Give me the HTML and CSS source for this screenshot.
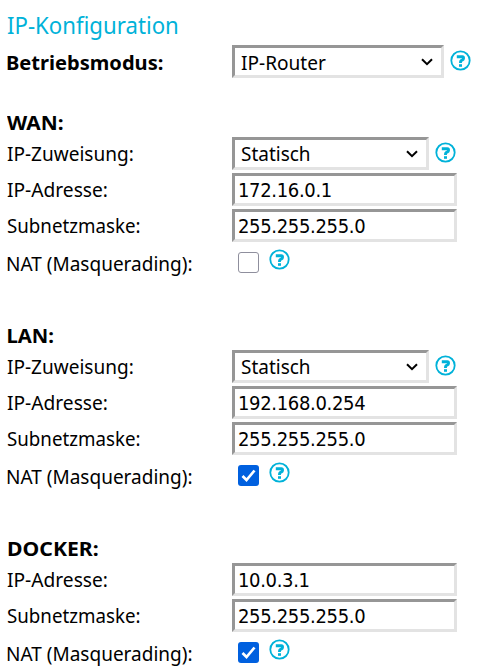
FILE: index.html
```html
<!DOCTYPE html>
<html lang="de">
<head>
<meta charset="utf-8">
<title>IP-Konfiguration</title>
<link rel="stylesheet" href="styles.css">
</head>
<body>
<svg width="0" height="0" class="defs">
  <symbol id="help" viewBox="0 0 21 21">
    <circle cx="10.5" cy="10.5" r="9.2" fill="none" stroke="currentColor" stroke-width="1.8"/>
    <path d="M6.8 6.7H12.4Q13.5 6.7 13.5 7.8V8.5Q13.5 9.6 12.3 10L11.5 10.3Q10.5 10.7 10.5 12V13" fill="none" stroke="currentColor" stroke-width="2.9"/>
    <path d="M9 14.2h3v2.6h-3z" fill="currentColor"/>
  </symbol>
  <symbol id="chevron" viewBox="0 0 12 8">
    <path d="M1 1.2L6 6.2L11 1.2" fill="none" stroke="#000" stroke-width="2"/>
  </symbol>
</svg>
<main>
  <h1><span class="t-title">IP-Konfiguration</span></h1>
  <div class="row mode">
    <span class="label bold"><span class="t-mode">Betriebsmodus:</span></span>
    <div class="select wide"><span class="t-router">IP-Router</span><svg class="chevron"><use href="#chevron"/></svg></div>
    <svg class="help"><use href="#help"/></svg>
  </div>

  <section>
    <h2><span class="t-wan">WAN:</span></h2>
    <div class="row">
      <span class="label"><span class="t-assign">IP-Zuweisung:</span></span>
      <div class="select"><span class="t-static">Statisch</span><svg class="chevron"><use href="#chevron"/></svg></div>
      <svg class="help"><use href="#help"/></svg>
    </div>
    <div class="row"><span class="label"><span class="t-addr">IP-Adresse:</span></span><div class="input">172.16.0.1</div></div>
    <div class="row"><span class="label"><span class="t-mask">Subnetzmaske:</span></span><div class="input">255.255.255.0</div></div>
    <div class="row nat">
      <span class="label"><span class="t-nat">NAT (Masquerading):</span></span>
      <span class="check"></span>
      <svg class="help"><use href="#help"/></svg>
    </div>
  </section>

  <section>
    <h2><span class="t-lan">LAN:</span></h2>
    <div class="row">
      <span class="label"><span class="t-assign">IP-Zuweisung:</span></span>
      <div class="select"><span class="t-static">Statisch</span><svg class="chevron"><use href="#chevron"/></svg></div>
      <svg class="help"><use href="#help"/></svg>
    </div>
    <div class="row"><span class="label"><span class="t-addr">IP-Adresse:</span></span><div class="input">192.168.0.254</div></div>
    <div class="row"><span class="label"><span class="t-mask">Subnetzmaske:</span></span><div class="input">255.255.255.0</div></div>
    <div class="row nat">
      <span class="label"><span class="t-nat">NAT (Masquerading):</span></span>
      <span class="check on"><svg viewBox="0 0 21 21"><path d="M4.5 11l4 4L16.5 5.5" fill="none" stroke="#fff" stroke-width="2.7"/></svg></span>
      <svg class="help"><use href="#help"/></svg>
    </div>
  </section>

  <section>
    <h2><span class="t-docker">DOCKER:</span></h2>
    <div class="row"><span class="label"><span class="t-addr">IP-Adresse:</span></span><div class="input">10.0.3.1</div></div>
    <div class="row"><span class="label"><span class="t-mask">Subnetzmaske:</span></span><div class="input">255.255.255.0</div></div>
    <div class="row nat">
      <span class="label"><span class="t-nat">NAT (Masquerading):</span></span>
      <span class="check on"><svg viewBox="0 0 21 21"><path d="M4.5 11l4 4L16.5 5.5" fill="none" stroke="#fff" stroke-width="2.7"/></svg></span>
      <svg class="help"><use href="#help"/></svg>
    </div>
  </section>
</main>
</body>
</html>
```
FILE: styles.css
```css
* { box-sizing: border-box; }
html { overflow: hidden; }
body {
  margin: 0;
  background: #fff;
  color: #000;
  font-family: "Noto Sans", sans-serif;
  font-size: 20.3px;
  white-space: nowrap;
}
.defs { display: none; }
h1, h2 { margin: 0; padding-left: 6.5px; }
h1 { height: 44px; padding-top: 9px; font-size: 24.4px; font-weight: 400; line-height: 32px; color: #00b2d9; }
h2 { height: 31px; padding-top: 3px; font-size: 20.3px; font-weight: 700; line-height: 28px; }
.row { display: flex; align-items: flex-start; height: 36px; padding-top: 1px; }
.mode { margin-bottom: 25px; }
section { margin-bottom: 36px; }
section:last-child { height: 140px; margin-bottom: 0; }
.label { width: 232px; flex: none; padding-left: 6.5px; line-height: 32px; }
.bold { font-weight: 700; padding-left: 5.7px; line-height: 34px; }
.select, .input {
  height: 33px;
  border: 3px solid;
  border-color: #969696 #e3e3e3 #e3e3e3 #969696;
  line-height: 28px;
}
.select { display: flex; align-items: center; justify-content: space-between; width: 197px; padding: 0 8px 0 5.5px; }
.wide { width: 212px; }
.input { width: 225px; padding-left: 3px; font-family: "DejaVu Sans Condensed", "DejaVu Sans", sans-serif; font-stretch: condensed; font-size: 20px; letter-spacing: -0.33px; }
.chevron { width: 12px; height: 8px; }
.help { width: 21px; height: 21px; margin: 5px 0 0 6px; color: #00b2d9; flex: none; }
.nat { height: 38px; padding-top: 4px; }
.nat .label { padding-left: 5.5px; line-height: 30px; }
.check { width: 21px; height: 21px; margin: 4px 4px 0 6px; border: 1px solid #8f8f9d; border-radius: 3px; flex: none; }
.check svg { display: block; width: 21px; height: 21px; }
.on { border: 0; background: #0060df; }
.nat .help { margin-top: 1px; margin-left: 6px; }

/* Narrow the letterforms slightly, per text */
h1 span, h2 span, .label span, .select span { display: inline-block; transform-origin: 0 50%; }
.t-title { transform: scaleX(.91); }
.t-mode { transform: scaleX(.99); }
.t-router { transform: scaleX(.94); }
.select .t-static { margin-bottom: 2px; transform: scaleX(.935); }
.t-assign { transform: scaleX(.938); }
.t-addr { transform: scaleX(.945); }
.t-mask { transform: scaleX(.922); }
.t-nat { transform: scaleX(.937); }
.t-wan { transform: scaleX(1.03); }
.t-lan { transform: scaleX(1.0); }
.t-docker { transform: scaleX(1.045); }
```
